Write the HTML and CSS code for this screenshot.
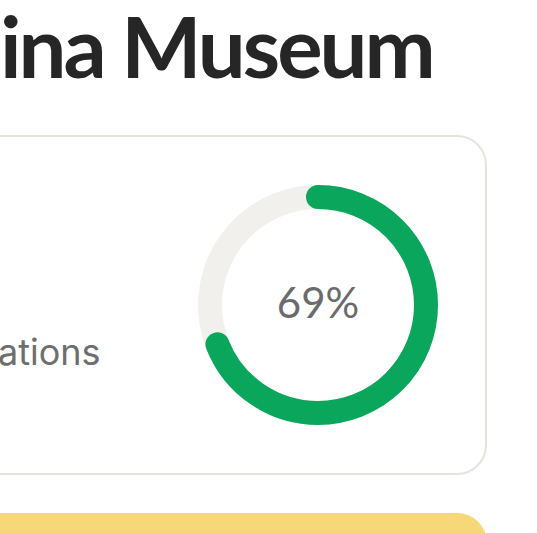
FILE: index.html
```html
<!DOCTYPE html>
<html>
<head>
<meta charset="utf-8">
<link rel="stylesheet" href="styles.css">
</head>
<body>
<div class="page">
  <h1 class="title">ina Museum</h1>
  <section class="card">
    <div class="card-text">
      <p class="label">ations</p>
    </div>
    <div class="donut">
      <svg width="240" height="240" viewBox="0 0 240 240">
        <circle cx="120" cy="120" r="108" fill="none" stroke="#f1f0ec" stroke-width="24"/>
        <circle cx="120" cy="120" r="108" fill="none" stroke="#0aa65b" stroke-width="24" stroke-linecap="round" stroke-dasharray="468.2 678.6" transform="rotate(-90 120 120)"/>
      </svg>
      <span class="donut-value">69%</span>
    </div>
  </section>
  <section class="note"></section>
</div>
</body>
</html>
```
FILE: styles.css
```css
html, body {
  margin: 0;
  padding: 0;
  background: #ffffff;
  overflow: hidden;
}
.page {
  width: 487px;
  display: flex;
  flex-direction: column;
}
.title {
  margin: 0;
  font-family: "Lato", "Liberation Sans", sans-serif;
  font-weight: 700;
  font-size: 85px;
  line-height: 90px;
  letter-spacing: -3px;
  color: #262626;
  white-space: nowrap;
}
.card {
  margin-top: 45px;
  margin-left: -40px;
  height: 336px;
  border: 2px solid #e6e4da;
  border-radius: 30px;
  display: flex;
  align-items: center;
  justify-content: space-between;
  padding-right: 47px;
}
.card-text {
  align-self: stretch;
  display: flex;
  flex-direction: column;
  justify-content: flex-end;
  padding-bottom: 101px;
}
.label {
  margin: 0 0 0 36px;
  font-family: "Inter", "Liberation Sans", sans-serif;
  font-size: 36px;
  line-height: 40px;
  color: #6e6e6e;
}
.donut {
  position: relative;
  width: 240px;
  height: 240px;
}
.donut svg {
  display: block;
}
.donut-value {
  position: absolute;
  inset: 0;
  display: flex;
  align-items: center;
  justify-content: center;
  padding-bottom: 7px;
  font-family: "Lato", "Liberation Sans", sans-serif;
  font-weight: 400;
  font-size: 42px;
  color: #6b6b6b;
}
.note {
  margin-top: 38px;
  margin-left: -40px;
  height: 120px;
  background: #f6d878;
  border-radius: 30px;
}
```
